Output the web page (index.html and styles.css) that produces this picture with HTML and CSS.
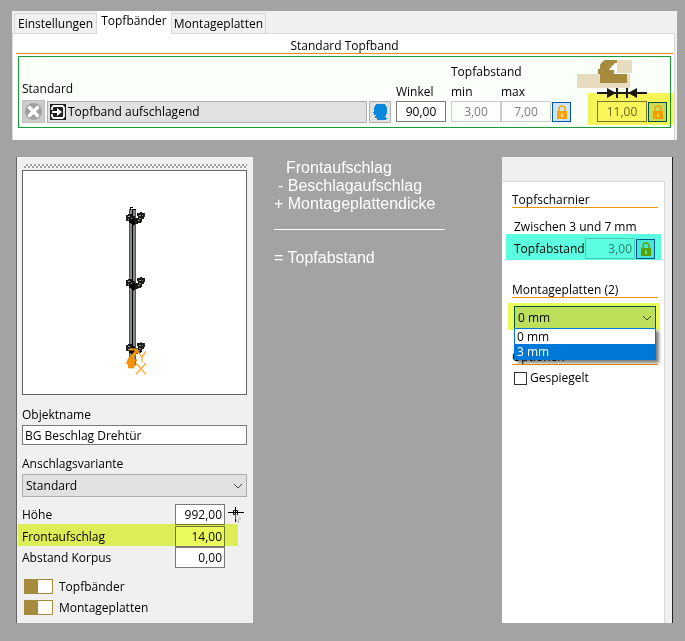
FILE: index.html
```html
<!DOCTYPE html>
<html lang="de">
<head>
<meta charset="utf-8">
<title>Topfbänder</title>
<link rel="stylesheet" href="styles.css">
</head>
<body>
<svg class="defs" width="0" height="0" aria-hidden="true">
  <symbol id="lock" viewBox="0 0 12 14">
    <path d="M3 7V4a3 3 0 0 1 6 0v3" fill="none" stroke="currentColor" stroke-width="1.4"/>
    <path d="M1 6h10v8H1z" fill="currentColor"/>
    <path d="M5.3 8.5h1.4v3.500H5.300z" fill="#fff"/>
  </symbol>
  <symbol id="hinge" viewBox="0 0 19 14">
    <path d="M0 3h2V2h4v2h3v4H7v2H3V9H0z" fill="#1a1a18"/>
    <path d="M2 4h2v1H2zM2 7h1v1H2zM5 6h1v1H5z" fill="#aaa"/>
    <path d="M3 7h7v5H9v1H8v1H6v-2H5v-1H3z" fill="#000"/>
    <path d="M9 6h3V4h-1V1h3V0h2v1h3v4h-1v2h-2v3h-1v1h-3v1H9z" fill="#1b1b17"/>
    <path d="M13 3h2v1h-2zM16 3h1v1h-1zM13 6h2v1h-2zM12 8h2v1h-2z" fill="#8d8d84"/>
  </symbol>
</svg>

<section class="card">
  <nav class="tabs">
    <button class="tab" type="button">Einstellungen</button>
    <button class="tab active" type="button">Topfbänder</button>
    <button class="tab" type="button">Montageplatten</button>
  </nav>
  <div class="tab-page">
    <h1 class="title">Standard Topfband</h1>
    <div class="frame">
      <div class="group wide">
        <label for="band">Standard</label>
        <div class="controls">
          <button class="tool clear" type="button" aria-label="Zurücksetzen">
            <svg width="17" height="17" viewBox="0 0 17 17"><circle cx="8.500" cy="8.500" r="8.500" fill="#a0a0a0"/><path d="M4.500 4.500l8 8M12.500 4.500l-8 8" stroke="#fff" stroke-width="3.400" stroke-linecap="round"/></svg>
          </button>
          <button class="band" id="band" type="button">
            <svg width="16" height="16" viewBox="0 0 16 16"><path d="M0 0h16v16H0z" fill="#1d1d1f"/><path d="M2 6V3.500L3.500 2h9L14 3.500v9L12.500 14h-9L2 12.500V10" fill="none" stroke="#fff" stroke-width="1.800"/><path d="M2 7h5V4l5 4-5 4V9H2z" fill="#fff"/></svg>
            Topfband aufschlagend
          </button>
          <button class="tool" type="button" aria-label="Benutzer">
            <svg width="16" height="18" viewBox="0 0 16 18"><path d="M4 1h9v1h1v2h1v7h-1v2h-1v1h1v1h1v1h-1v1H5v-2H3v-2h1v-1H2v-2H1V9h1V4h1V2h1z" fill="#0a89dc"/></svg>
          </button>
        </div>
      </div>
      <div class="group">
        <label for="winkel">Winkel</label>
        <div class="controls"><input class="num mid" id="winkel" value="90,00"></div>
      </div>
      <div class="group">
        <span class="caption">Topfabstand</span>
        <div class="labels"><label for="min">min</label><label for="max">max</label></div>
        <div class="controls">
          <input class="num mid" id="min" value="3,00" disabled><input class="num mid" id="max" value="7,00" disabled>
          <button class="lock" type="button" aria-label="Sperren"><svg width="12" height="14"><use href="#lock"/></svg></button>
        </div>
      </div>
      <div class="group distance">
        <svg class="diagram" width="72" height="40" viewBox="0 4 72 40">
          <path d="M0 18h53v14H0z" fill="#e8dcc0"/>
          <path d="M23 27V18h-2v-5h2V9l2-3 3-2h12v3l-5 3-3 4h5v4h13v9z" fill="#a78b3c"/>
          <path d="M33 13l5-6h2v6z" fill="#fff"/>
          <path d="M40 4h15v13H40z" fill="#e8dcc0"/>
          <path d="M20 37h50M40 32v10M50 32v10" fill="none" stroke="#1d1712" stroke-width="2"/>
          <path d="M30 32l9 5-9 5zM60 32l-9 5 9 5z" fill="#1d1712"/>
        </svg>
        <div class="controls marked yellow">
          <input class="num mid dim" value="11,00" aria-label="Abstand">
          <button class="lock" type="button" aria-label="Sperren"><svg width="12" height="14"><use href="#lock"/></svg></button>
        </div>
      </div>
    </div>
  </div>
</section>

<main class="columns">
  <section class="props">
    <div class="grip"></div>
    <svg class="view" viewBox="22 170 225 225">
      <g shape-rendering="crispEdges">
        <path d="M129 208h7v158h-7z" fill="#858888"/>
        <path d="M129 208h1v158h-1zM135 208h1v158h-1z" fill="#555858"/>
        <path d="M132 208h1v160h-1zM130 206h3v1h-3zM130 206h1v3h-1zM133 208h3v1h-3z" fill="#000"/>
      </g>
      <g shape-rendering="crispEdges">
        <use href="#hinge" x="126" y="211" width="19" height="14"/>
        <use href="#hinge" x="126" y="277" width="19" height="14"/>
        <use href="#hinge" x="126" y="343" width="19" height="14"/>
      </g>
      <path d="M133 367l2-1v-5l-2 1z" fill="#888"/>
      <path d="M132 355l3-4h-6v-2h9v4l-4 5v2h3v2h-2v4l-1 3h-6v-3l-2-2 2-5z" fill="#f39208"/>
      <path d="M138 352l4 6 4-6M142 358v5M136 364l10 11M146 364l-10 11" fill="none" stroke="#ffae3c" stroke-width="1.500"/>
    </svg>
    <label for="name">Objektname</label>
    <input class="text" id="name" value="BG Beschlag Drehtür">
    <label for="variant">Anschlagsvariante</label>
    <select class="select" id="variant"><option>Standard</option></select>
    <div class="rows">
      <div class="row"><label for="height">Höhe</label><input class="num" id="height" value="992,00">
        <svg class="pick" width="18" height="18" viewBox="0 0 18 18"><path d="M1 6.500h16M8.500 1v15" stroke="#000" fill="none"/><path d="M6.500 4.500h4v4h-4z" fill="none" stroke="#000"/><path d="M9 8l5 5h-3l1 3-1 1-2-4z" fill="#fff" stroke="#bbb"/></svg>
      </div>
      <div class="row marked lime"><label for="front">Frontaufschlag</label><input class="num" id="front" value="14,00"></div>
      <div class="row"><label for="corpus">Abstand Korpus</label><input class="num" id="corpus" value="0,00"></div>
    </div>
    <label class="switch"><input type="checkbox" checked>Topfbänder</label>
    <label class="switch"><input type="checkbox" checked>Montageplatten</label>
  </section>

  <section class="formula">
    <p class="indent">Frontaufschlag</p>
    <p class="minus">- Beschlagaufschlag</p>
    <p>+ Montageplattendicke</p>
    <hr>
    <p>= Topfabstand</p>
  </section>

  <section class="side">
    <div class="sheet">
      <h2>Topfscharnier</h2>
      <p class="range">Zwischen 3 und 7 mm</p>
      <div class="controls marked teal">
        <label for="gap">Topfabstand</label>
        <input class="num" id="gap" value="3,00" disabled>
        <button class="lock" type="button" aria-label="Sperren"><svg width="12" height="14"><use href="#lock"/></svg></button>
      </div>
      <h2 class="plates">Montageplatten (2)</h2>
      <div class="combo marked lime">
        <select class="select focus" aria-label="Montageplatten"><option>0 mm</option><option>3 mm</option></select>
        <ul class="list"><li>0 mm</li><li class="selected">3 mm</li></ul>
      </div>
      <h2 class="options">Optionen</h2>
      <label class="check"><input type="checkbox">Gespiegelt</label>
    </div>
  </section>
</main>
</body>
</html>
```

FILE: styles.css
```css
* { box-sizing: border-box; }

body {
  margin: 0;
  padding: 11px 8px 16px 12px;
  background: #a3a3a3;
  color: #000;
  font: 12px/16px "Open Sans", "Noto Sans", sans-serif;
}

button, input, select { font: inherit; color: inherit; margin: 0; border-radius: 0; }
h1, h2, p, ul { margin: 0; padding: 0; font: inherit; }
svg { display: block; flex: none; overflow: visible; }
label { white-space: nowrap; }
.defs { position: absolute; }

/* Tab card */
.card { background: #f0f0f0; padding-right: 2px; }
.tabs { display: flex; align-items: flex-end; height: 22px; padding-left: 2px; }
.tab {
  height: 20px;
  padding: 0 3px;
  border: 1px solid #d9d9d9;
  border-width: 1px 1px 0;
  background: #f0f0f0;
  line-height: 16px;
}
.tab + .tab { border-left: 0; padding: 0 2px; }
.tab.tab.active {
  position: relative;
  height: 23px;
  margin-bottom: -1px;
  padding: 0 4px 4px;
  background: #fff;
  border-color: #fff #d9d9d9;
}
.tab-page {
  padding: 4px 1px 12px 3px;
  background: #fff;
  border: 1px solid #d9d9d9;
  border-width: 1px 1px 0;
}
.title { height: 16px; border-bottom: 1px solid #f39208; text-align: center; }
.frame {
  display: flex;
  align-items: flex-end;
  gap: 5px;
  height: 72px;
  margin: 2px 2px 0;
  padding: 0 3px 4px;
  border: 1px solid #179b32;
  background: #fbfffa;
}
.group { display: flex; flex-direction: column; }
.group.wide { flex: 1; min-width: 0; }
.controls { display: flex; align-items: center; height: 23px; position: relative; }
.wide .controls { gap: 2px; margin-top: 3px; }
.caption { margin-bottom: 4px; }
.labels { display: flex; }
.labels label { width: 50px; }
.distance { margin-left: 21px; }
.diagram { margin: 0 0 0 -20px; }

.tool {
  display: grid;
  place-items: center;
  width: 22px;
  height: 22px;
  padding: 0;
  border: 1px solid #adadad;
  background: #e1e1e1;
}
.tool.clear { width: 23px; height: 23px; background: #ccc; border-color: #bfbfbf; }
.band {
  display: flex;
  align-items: center;
  gap: 2px;
  flex: 1;
  height: 22px;
  padding: 0 2px;
  border: 1px solid #adadad;
  background: #e1e1e1;
}
.num {
  width: 50px;
  height: 21px;
  padding: 0 2px;
  border: 1px solid #7a7a7a;
  background: #fff;
  text-align: right;
}
.num.mid { text-align: center; }
.num.dim { color: #6d6d6d; }
.num:disabled { border-color: #ccc; color: #7d7d7d; background: transparent; }
.lock {
  display: grid;
  place-items: center;
  width: 19px;
  height: 20px;
  margin-left: 1px;
  padding: 0;
  border: 1px solid #0054a0;
  background: #cce4f7;
  color: #fba200;
}

/* Marker strokes over a row */
.marked { position: relative; }
.marked::after {
  content: "";
  position: absolute;
  inset: 0;
  mix-blend-mode: multiply;
  pointer-events: none;
}
.yellow::after { inset: -7px -7px -2px -9px; background: #faf55a; }
.lime::after { background: #ebfb5c; }
.teal::after { inset: -3px -6px 0 -8px; background: #5cffe0; }

/* Lower area */
.columns { display: flex; align-items: stretch; margin: 17px 4px 0; }
.props {
  display: flex;
  flex-direction: column;
  flex: 0 0 237px;
  padding: 7px 6px 5px 5px;
  border-left: 1px solid #666;
  background: #f0f0f0;
}
.grip {
  height: 4px;
  margin: 0 0 2px 2px;
  background: repeating-conic-gradient(#a0a0a0 0 25%, #f8f8f8 0 50%) 0 0 / 4px 4px;
}
.view { width: 100%; margin-bottom: 12px; border: 1px solid #666; background: #fff; }
.text {
  height: 20px;
  margin: 2px 0 11px;
  padding: 0 2px;
  border: 1px solid #7a7a7a;
  background: #fff;
}
.select {
  appearance: none;
  width: 100%;
  height: 23px;
  padding: 0 3px;
  border: 1px solid #adadad;
  background: #e1e1e1 url("data:image/svg+xml,%3Csvg xmlns='http://www.w3.org/2000/svg' width='10' height='6'%3E%3Cpath d='M1 1l4 4 4-4' fill='none' stroke='%23444'/%3E%3C/svg%3E") no-repeat right 3px center;
}
.props .select { margin-top: 2px; }
.rows { margin: 7px 0 8px; }
.row { display: flex; align-items: center; height: 21px; }
.row label { flex: none; width: 153px; }
.row.marked { margin-top: 1px; }
.row.marked::after { inset: -2px 9px 1px -4px; }
.pick { margin-left: 2px; }
.switch { display: flex; align-items: center; gap: 6px; height: 21px; padding-left: 2px; }
.switch input {
  appearance: none;
  width: 29px;
  height: 15px;
  border: 1px solid #a78b3c;
  background: linear-gradient(90deg, #a78b3c 50%, #fff 50%);
}

.formula {
  flex: 1;
  padding: 2px 0 0 21px;
  color: #fff;
  font: 16px/18px "Liberation Sans", Arial, sans-serif;
  white-space: nowrap;
}
.formula .indent { padding-left: 12px; }
.formula .minus { padding-left: 4px; }
.formula hr { width: 171px; margin: 16px 0 19px; border: 0; border-top: 1px solid #fff; }

.side {
  display: flex;
  flex: 0 0 171px;
  padding: 24px 7px 0 0;
  border-right: 1px solid #222;
  background: #f0f0f0;
}
.sheet {
  flex: 1;
  padding: 10px 6px 0 10px;
  border: 1px solid #d9d9d9;
  border-width: 1px 1px 0 0;
  background: #fff;
}
.sheet h2 { height: 16px; border-bottom: 1px solid #f39208; }
.range { margin: 11px 0 2px 2px; }
.sheet .controls { margin: 0 3px 0 2px; }
.sheet .controls label { flex: 1; }
.plates { margin-top: 22px; }
.combo { margin: 8px 2px 0; }
.combo.marked::after { inset: -3px -4px -1px -6px; }
.select.focus { display: block; border-color: #0054a0; background-color: #cce4f7; }
.list {
  position: absolute;
  z-index: 1;
  top: 22px;
  left: 0;
  right: 0;
  border: 1px solid #0078d7;
  background: #fff;
  box-shadow: 3px 3px 3px rgba(0, 0, 0, .5);
  list-style: none;
}
.list li { height: 15px; padding-left: 2px; line-height: 15px; }
.list .selected { background: #0078d7; color: #fff; }
.options { margin-top: 20px; }
.check { display: flex; align-items: center; gap: 3px; margin: 5px 0 0 2px; }
.check input {
  appearance: none;
  width: 13px;
  height: 13px;
  border: 1px solid #333;
  background: #fff;
}
```
